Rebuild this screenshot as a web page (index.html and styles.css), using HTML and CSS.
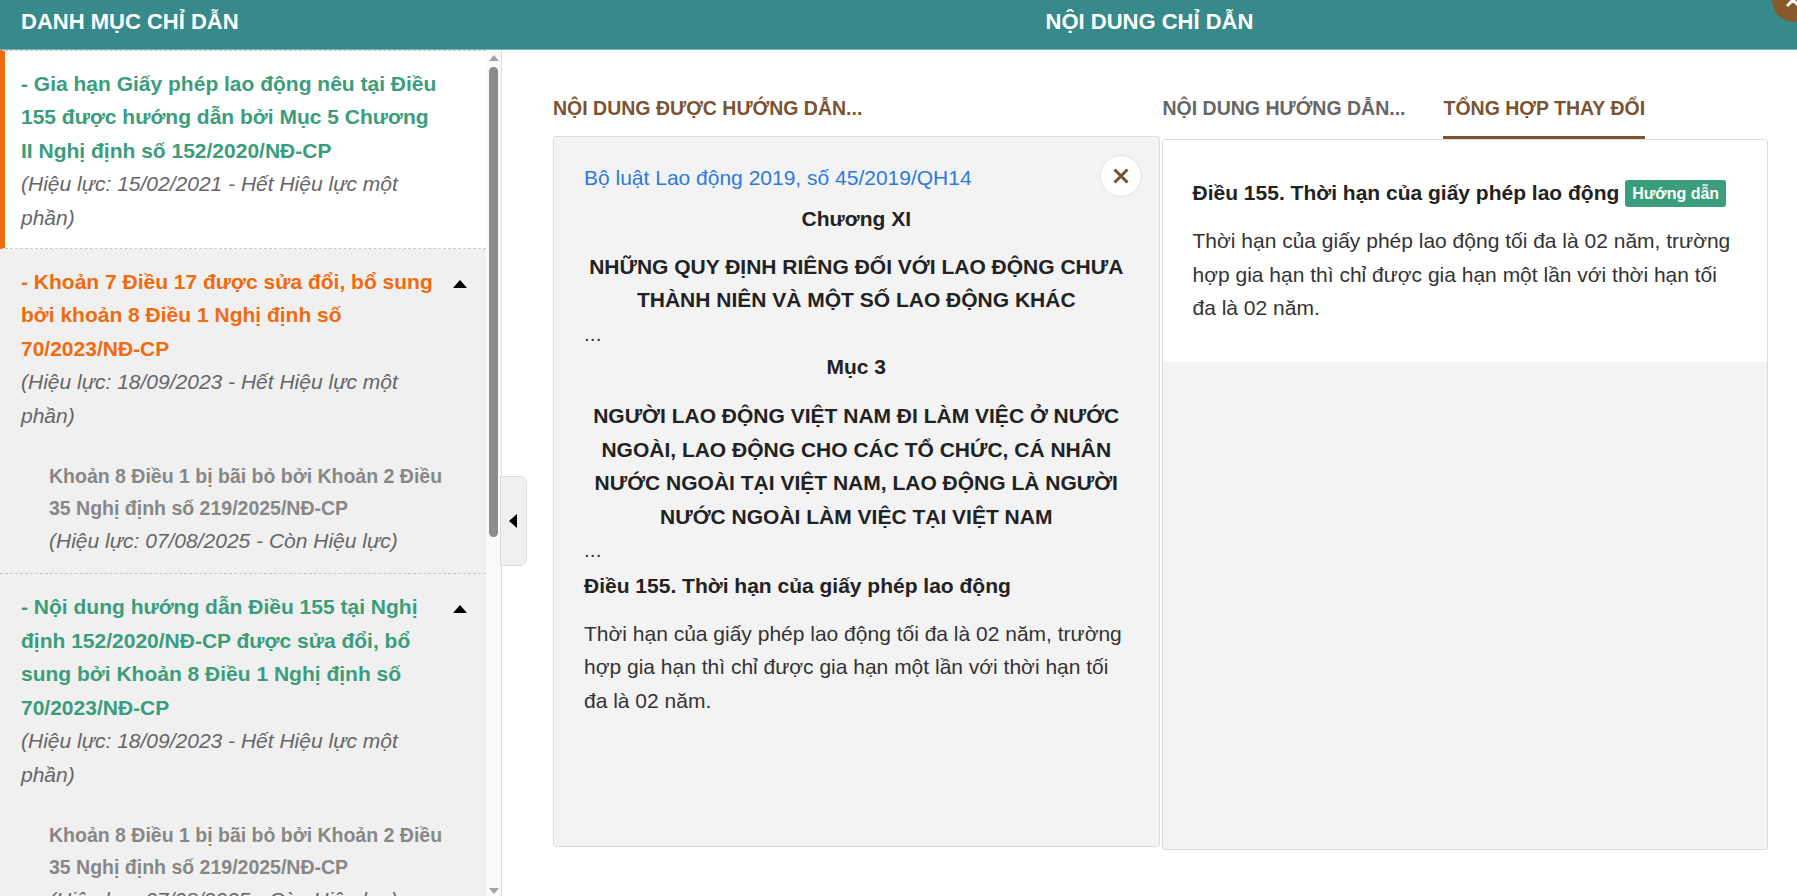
FILE: index.html
```html
<!DOCTYPE html>
<html lang="vi">
<head>
  <meta charset="UTF-8" />
  <title>Nội dung chỉ dẫn</title>
  <link rel="stylesheet" href="styles.css">
</head>
<body>
  <header class="topbar">
    <div class="topbar-left">DANH MỤC CHỈ DẪN</div>
    <div class="topbar-title">NỘI DUNG CHỈ DẪN</div>
    <button class="modal-close" type="button">
      <svg width="16" height="16" viewBox="0 0 16 16"><path d="M3 3L13 13M13 3L3 13" stroke="#fff" stroke-width="3" stroke-linecap="round"/></svg>
    </button>
  </header>

  <div class="main">
    <aside class="sidebar">
      <div class="guide-list">
        <div class="guide-item active">
          <div class="guide-row">
            <div class="guide-body">
              <div class="guide-title green">- Gia hạn Giấy phép lao động nêu tại Điều 155 được hướng dẫn bởi Mục 5 Chương II Nghị định số 152/2020/NĐ-CP</div>
              <div class="guide-meta">(Hiệu lực: 15/02/2021 - Hết Hiệu lực một phần)</div>
            </div>
            <span class="caret-space"></span>
          </div>
        </div>

        <div class="guide-item">
          <div class="guide-row">
            <div class="guide-body">
              <div class="guide-title orange">- Khoản 7 Điều 17 được sửa đổi, bổ sung bởi khoản 8 Điều 1 Nghị định số 70/2023/NĐ-CP</div>
              <div class="guide-meta">(Hiệu lực: 18/09/2023 - Hết Hiệu lực một phần)</div>
              <div class="guide-sub">
                <div class="guide-title muted">Khoản 8 Điều 1 bị bãi bỏ bởi Khoản 2 Điều 35 Nghị định số 219/2025/NĐ-CP</div>
                <div class="guide-meta">(Hiệu lực: 07/08/2025 - Còn Hiệu lực)</div>
              </div>
            </div>
            <span class="caret-up"></span>
          </div>
        </div>

        <div class="guide-item">
          <div class="guide-row">
            <div class="guide-body">
              <div class="guide-title green">- Nội dung hướng dẫn Điều 155 tại Nghị định 152/2020/NĐ-CP được sửa đổi, bổ sung bởi Khoản 8 Điều 1 Nghị định số 70/2023/NĐ-CP</div>
              <div class="guide-meta">(Hiệu lực: 18/09/2023 - Hết Hiệu lực một phần)</div>
              <div class="guide-sub">
                <div class="guide-title muted">Khoản 8 Điều 1 bị bãi bỏ bởi Khoản 2 Điều 35 Nghị định số 219/2025/NĐ-CP</div>
                <div class="guide-meta">(Hiệu lực: 07/08/2025 - Còn Hiệu lực)</div>
              </div>
            </div>
            <span class="caret-up"></span>
          </div>
        </div>
      </div>

      <div class="scrollbar">
        <span class="scroll-arrow up"></span>
        <span class="scroll-thumb"></span>
        <span class="scroll-arrow down"></span>
      </div>
    </aside>

    <section class="content">
      <button class="collapse-btn" type="button"><span class="caret-left"></span></button>

      <div class="col">
        <div class="col-head">
          <h3 class="col-title">NỘI DUNG ĐƯỢC HƯỚNG DẪN...</h3>
        </div>
        <div class="doc-box doc-source">
          <button class="doc-close" type="button">
            <svg width="18" height="18" viewBox="0 0 18 18"><path d="M2.5 2.5L15.5 15.5M15.5 2.5L2.5 15.5" stroke="#7a5028" stroke-width="3"/></svg>
          </button>
          <a class="doc-link" href="#">Bộ luật Lao động 2019, số 45/2019/QH14</a>
          <p class="doc-label">Chương XI</p>
          <p class="doc-heading">NHỮNG QUY ĐỊNH RIÊNG ĐỐI VỚI LAO ĐỘNG CHƯA THÀNH NIÊN VÀ MỘT SỐ LAO ĐỘNG KHÁC</p>
          <p class="doc-dots">...</p>
          <p class="doc-label label-wide">Mục 3</p>
          <p class="doc-heading">NGƯỜI LAO ĐỘNG VIỆT NAM ĐI LÀM VIỆC Ở NƯỚC NGOÀI, LAO ĐỘNG CHO CÁC TỔ CHỨC, CÁ NHÂN NƯỚC NGOÀI TẠI VIỆT NAM, LAO ĐỘNG LÀ NGƯỜI NƯỚC NGOÀI LÀM VIỆC TẠI VIỆT NAM</p>
          <p class="doc-dots">...</p>
          <p class="doc-article">Điều 155. Thời hạn của giấy phép lao động</p>
          <p class="doc-text">Thời hạn của giấy phép lao động tối đa là 02 năm, trường hợp gia hạn thì chỉ được gia hạn một lần với thời hạn tối đa là 02 năm.</p>
        </div>
      </div>

      <div class="col">
        <div class="tabs">
          <span class="tab">NỘI DUNG HƯỚNG DẪN...</span>
          <span class="tab active">TỔNG HỢP THAY ĐỔI</span>
        </div>
        <div class="doc-box doc-summary">
          <div class="summary-card">
            <p class="doc-article">Điều 155. Thời hạn của giấy phép lao động <span class="badge">Hướng dẫn</span></p>
            <p class="doc-text">Thời hạn của giấy phép lao động tối đa là 02 năm, trường hợp gia hạn thì chỉ được gia hạn một lần với thời hạn tối đa là 02 năm.</p>
          </div>
        </div>
      </div>
    </section>
  </div>
</body>
</html>
```

FILE: styles.css
```css
* {
  box-sizing: border-box;
}

body {
  margin: 0;
  height: 896px;
  overflow: hidden;
  font-family: 'Liberation Sans', Arial, sans-serif;
  color: #333;
  background-color: #fff;
}

p {
  margin: 0;
}

button {
  font-family: inherit;
  cursor: pointer;
}

/* thanh tiêu đề */
.topbar {
  position: relative;
  display: flex;
  height: 50px;
  background-color: #388a8a;
  border-bottom: 1px solid #79b3b3;
  color: #fff;
  font-size: 22px;
  font-weight: bold;
  line-height: 26px;
}

.topbar-left {
  width: 502px;
  padding: 9px 0 0 21px;
}

.topbar-title {
  flex: 1;
  text-align: center;
  padding-top: 9px;
}

.modal-close {
  position: absolute;
  top: -22px;
  right: -19px;
  width: 44px;
  height: 44px;
  border: none;
  border-radius: 50%;
  background-color: #875a2b;
  padding: 0;
  display: flex;
  align-items: center;
  justify-content: center;
}

.modal-close svg {
  margin: 0 3px 0 0;
}

.main {
  display: flex;
  height: 846px;
}

/* danh mục bên trái */
.sidebar {
  display: flex;
  width: 502px;
  border-right: 1px solid #dedede;
}

.guide-list {
  width: 486px;
  overflow: hidden;
  background-color: #f0f0f0;
}

.guide-item {
  padding: 16px 19px 14px 21px;
  border-bottom: 1px dashed #c8c8c8;
  font-size: 21px;
  line-height: 33.4px;
}

.guide-item.active {
  background-color: #fff;
  border-top: 1px dashed #c8c8c8;
  border-left: 5px solid #f06a0e;
  padding-left: 16px;
}

.guide-item + .guide-item {
  padding-bottom: 16px;
}

.guide-row {
  display: flex;
  align-items: flex-start;
}

.guide-body {
  flex: 1;
  min-width: 0;
}

.guide-title {
  font-weight: bold;
}

.guide-title.green {
  color: #3a9d7b;
}

.guide-title.orange {
  color: #f06a0e;
}

.guide-title.muted {
  color: #878787;
  font-size: 19.5px;
  line-height: 32px;
}

.guide-meta {
  font-style: italic;
  color: #666;
}

.guide-sub {
  margin-top: 28px;
  padding-left: 28px;
}

.caret-space {
  width: 27px;
}

.caret-up {
  width: 0;
  height: 0;
  margin: 15px 0 0 5px;
  border-left: 7px solid transparent;
  border-right: 7px solid transparent;
  border-bottom: 8px solid #000;
}

.scrollbar {
  width: 15px;
  display: flex;
  flex-direction: column;
  align-items: center;
  background-color: #fafafa;
}

.scroll-arrow {
  width: 0;
  height: 0;
  border-left: 5px solid transparent;
  border-right: 5px solid transparent;
}

.scroll-arrow.up {
  margin-top: 5px;
  border-bottom: 6px solid #a3a3a3;
}

.scroll-arrow.down {
  margin-top: auto;
  margin-bottom: 2px;
  border-top: 6px solid #a3a3a3;
}

.scroll-thumb {
  width: 9px;
  height: 470px;
  margin-top: 6px;
  border-radius: 5px;
  background-color: #8c8c8c;
}

/* nội dung bên phải */
.content {
  flex: 1;
  position: relative;
  display: flex;
  gap: 2px;
  padding: 0 29px 0 51px;
}

.collapse-btn {
  position: absolute;
  left: -2px;
  top: 426px;
  width: 27px;
  height: 90px;
  padding: 0;
  background-color: #f0f0f0;
  border: 1px solid #dcdcdc;
  border-radius: 0 7px 7px 0;
  display: flex;
  align-items: center;
  justify-content: center;
}

.caret-left {
  width: 0;
  height: 0;
  margin-right: 2px;
  border-top: 7px solid transparent;
  border-bottom: 7px solid transparent;
  border-right: 8px solid #000;
}

.col {
  flex: 1;
  display: flex;
  flex-direction: column;
}

.col-head {
  height: 86px;
  display: flex;
  align-items: flex-end;
}

.col-title {
  margin: 0;
  padding-bottom: 16px;
  font-size: 19.5px;
  line-height: 24px;
  color: #7a5431;
}

.tabs {
  height: 89px;
  display: flex;
  align-items: flex-end;
  gap: 38px;
  padding-left: 1px;
}

.tab {
  padding-bottom: 16px;
  border-bottom: 3px solid transparent;
  font-size: 19.5px;
  font-weight: bold;
  line-height: 24px;
  color: #666;
}

.tab.active {
  color: #7a5431;
  border-bottom-color: #7a5431;
}

.doc-box {
  position: relative;
  height: 711px;
  border: 1px solid #dcdcdc;
  border-radius: 3px;
  background-color: #f3f3f3;
  font-size: 21px;
  line-height: 33.4px;
}

.doc-source {
  padding: 24px 30px;
}

.doc-close {
  position: absolute;
  top: 18px;
  right: 17px;
  width: 42px;
  height: 42px;
  padding: 0;
  border: 1px solid #e0e0e0;
  border-radius: 50%;
  background-color: #fff;
  display: flex;
  align-items: center;
  justify-content: center;
}

.doc-link {
  display: block;
  margin-bottom: 8px;
  color: #2d79e0;
  text-decoration: none;
}

.doc-label {
  text-align: center;
  font-weight: bold;
  color: #222;
  margin-bottom: 14px;
}

.doc-label.label-wide {
  margin-bottom: 16px;
}

.doc-heading {
  text-align: center;
  font-weight: bold;
  color: #222;
}

.doc-article {
  margin: 3px 0 14px;
  font-weight: bold;
  color: #222;
}

.doc-text {
  color: #333;
}

.doc-summary {
  overflow: hidden;
}

.summary-card {
  background-color: #fff;
  padding: 36px 30px 37px;
}

.summary-card .doc-article {
  margin: 0 0 15px;
}

.badge {
  display: inline-block;
  height: 27px;
  padding: 0 7px;
  border-radius: 3px;
  background-color: #3a9d7b;
  color: #fff;
  font-size: 16px;
  line-height: 27px;
  vertical-align: 1px;
}
```
